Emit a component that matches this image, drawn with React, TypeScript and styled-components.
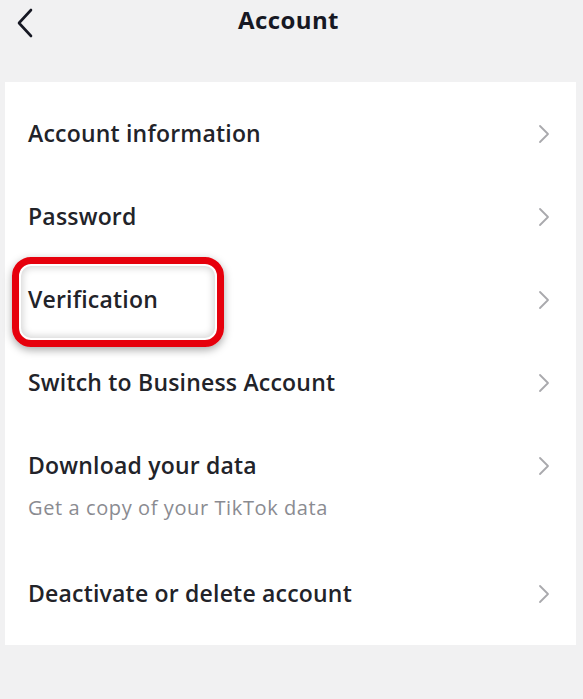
import React from 'react'
import styled, { createGlobalStyle } from 'styled-components'

const GlobalStyle = createGlobalStyle`
  html, body {
    margin: 0;
    padding: 0;
    background: #f1f1f2;
  }
  body {
    font-family: 'Open Sans', 'Liberation Sans', sans-serif;
    -webkit-font-smoothing: antialiased;
  }
`

const Screen = styled.div`
  width: 583px;
  height: 699px;
  background: #f1f1f2;
  display: flex;
  flex-direction: column;
  overflow: hidden;
`

const Header = styled.div`
  height: 82px;
  display: grid;
  grid-template-columns: 60px 1fr 66px;
  align-items: start;
`

const BackButton = styled.div`
  padding: 8px 0 0 16px;
  color: #161823;
`

const Title = styled.h1`
  margin: 0;
  padding-top: 3px;
  text-align: center;
  font-size: 24px;
  font-weight: 700;
  color: #161823;
  letter-spacing: 0.4px;
`

const Card = styled.div`
  margin: 0 7px 0 5px;
  background: #fff;
  padding: 10px 0 10px;
  height: 563px;
  box-sizing: border-box;
`

const Row = styled.div<{ tall?: boolean }>`
  position: relative;
  height: ${(p) => (p.tall ? '128px' : '83px')};
  display: flex;
  align-items: flex-start;
  padding: 0 26px 0 23px;
`

const RowText = styled.div`
  flex: 1;
  display: flex;
  flex-direction: column;
  padding-top: 26px;
`

const Label = styled.span`
  font-size: 23px;
  font-weight: 600;
  color: #222329;
  line-height: 30px;
  letter-spacing: 0.2px;
`

const Sub = styled.span`
  margin-top: 15px;
  font-size: 20px;
  color: #8a8b91;
  line-height: 26px;
  letter-spacing: 0.6px;
`

const Chevron = styled.div`
  padding-top: 32px;
  color: #a9a9ad;
`

const Highlight = styled.div`
  position: absolute;
  left: 7px;
  top: -1px;
  width: 198px;
  height: 76px;
  border: 7px solid #e6000c;
  border-radius: 19px;
  box-shadow: inset 0 0 0 2px #fff, inset 0 0 7px 4px rgba(0, 0, 0, 0.16), 0 3px 8px rgba(0, 0, 0, 0.35);
  pointer-events: none;
`

const ChevronIcon = () => (
  <svg width="12" height="20" viewBox="0 0 12 20" fill="none">
    <path d="M2 2l8 8-8 8" stroke="currentColor" strokeWidth="1.8" strokeLinecap="round" strokeLinejoin="round" />
  </svg>
)

const BackIcon = () => (
  <svg width="20" height="30" viewBox="0 0 20 30" fill="none">
    <path d="M15 2L3 15l12 13" stroke="currentColor" strokeWidth="2.6" strokeLinecap="round" strokeLinejoin="round" />
  </svg>
)

type Item = { label: string; sub?: string; highlight?: boolean }

const items: Item[] = [
  { label: 'Account information' },
  { label: 'Password' },
  { label: 'Verification', highlight: true },
  { label: 'Switch to Business Account' },
  { label: 'Download your data', sub: 'Get a copy of your TikTok data' },
  { label: 'Deactivate or delete account' }
]

export default function App() {
  return (
    <Screen>
      <GlobalStyle />
      <Header>
        <BackButton>
          <BackIcon />
        </BackButton>
        <Title>Account</Title>
        <div />
      </Header>
      <Card>
        {items.map((item) => (
          <Row key={item.label} tall={!!item.sub}>
            {item.highlight && <Highlight />}
            <RowText>
              <Label>{item.label}</Label>
              {item.sub && <Sub>{item.sub}</Sub>}
            </RowText>
            <Chevron>
              <ChevronIcon />
            </Chevron>
          </Row>
        ))}
      </Card>
    </Screen>
  )
}
